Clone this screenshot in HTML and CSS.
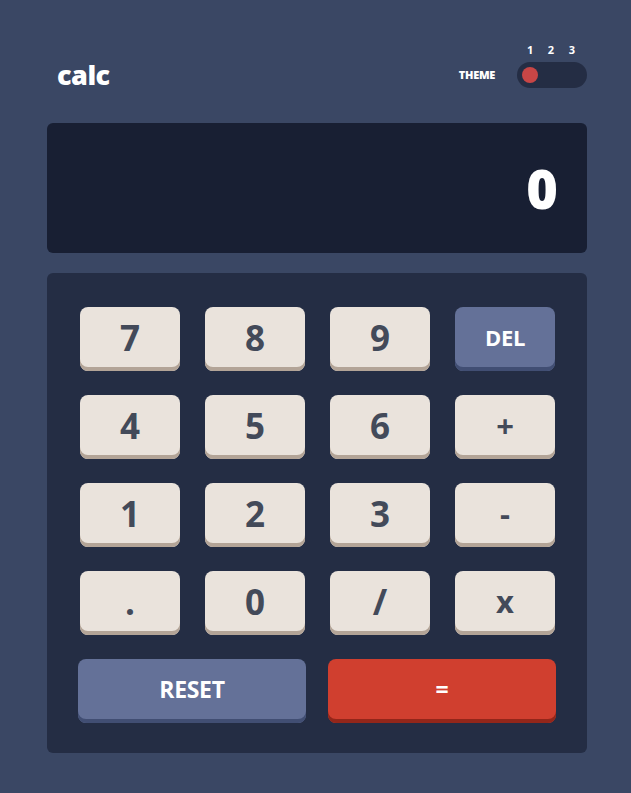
FILE: index.html
```html
<!DOCTYPE html>
<html lang="en">
<head>
<meta charset="utf-8">
<title>calc</title>
<link rel="stylesheet" href="styles.css">
</head>
<body>
<main class="calc">
  <header class="header">
    <h1 class="logo">calc</h1>
    <div class="theme">
      <span class="theme-label">THEME</span>
      <div class="switch">
        <div class="nums"><span>1</span><span>2</span><span>3</span></div>
        <div class="track"><span class="dot"></span></div>
      </div>
    </div>
  </header>
  <section class="display">0</section>
  <section class="keypad">
    <div class="keys">
      <button class="key">7</button>
      <button class="key">8</button>
      <button class="key">9</button>
      <button class="key key-blue key-del">DEL</button>
      <button class="key">4</button>
      <button class="key">5</button>
      <button class="key">6</button>
      <button class="key key-op">+</button>
      <button class="key">1</button>
      <button class="key">2</button>
      <button class="key">3</button>
      <button class="key key-op">-</button>
      <button class="key">.</button>
      <button class="key">0</button>
      <button class="key">/</button>
      <button class="key key-op">x</button>
    </div>
    <div class="wide-keys">
      <button class="key key-blue key-wide">RESET</button>
      <button class="key key-red key-wide">=</button>
    </div>
  </section>
</main>
</body>
</html>
```
FILE: styles.css
```css
* { box-sizing: border-box; }
html, body { margin: 0; padding: 0; }
body {
  background: #3a4764;
  font-family: "Open Sans", "Liberation Sans", sans-serif;
  font-weight: 700;
  color: #ffffff;
}
.calc {
  width: 540px;
  margin-left: 47px;
}
.header {
  display: flex;
  justify-content: space-between;
  align-items: flex-end;
  padding-top: 43px;
}
.logo {
  margin: 0 0 0 10px;
  font-size: 27px;
  line-height: 26px;
  font-weight: 800;
  letter-spacing: -0.5px;
}
.theme {
  display: flex;
  align-items: flex-end;
  gap: 22px;
}
.theme-label {
  font-size: 11px;
  font-weight: 800;
  line-height: 26px;
  letter-spacing: -0.3px;
}
.switch {
  width: 70px;
  display: flex;
  flex-direction: column;
  gap: 6px;
}
.nums {
  display: flex;
  justify-content: space-between;
  padding: 0 12px 0 10px;
  font-size: 11px;
  line-height: 13px;
}
.track {
  height: 26px;
  border-radius: 13px;
  background: #242d44;
  padding: 5px;
  display: flex;
  align-items: center;
}
.dot {
  width: 16px;
  height: 16px;
  border-radius: 50%;
  background: #c84646;
}
.display {
  margin-top: 35px;
  height: 130px;
  background: #181f33;
  border-radius: 6px;
  display: flex;
  align-items: center;
  justify-content: flex-end;
  padding-right: 29px;
  font-size: 54px;
  font-weight: 800;
  line-height: 1;
}
.keypad {
  margin-top: 20px;
  background: #242d44;
  border-radius: 6px;
  padding: 34px 32px 30px 33px;
  height: 480px;
}
.keys {
  display: grid;
  grid-template-columns: repeat(4, 100px);
  column-gap: 25px;
  row-gap: 24px;
}
.key {
  height: 64px;
  border: none;
  border-radius: 8px;
  background: #eae3dc;
  box-shadow: inset 0 -4px 0 #b3a497;
  color: #434a59;
  font-family: inherit;
  font-weight: 700;
  font-size: 35px;
  padding: 0 0 4px 0;
  line-height: 1;
}
.key-op {
  font-size: 31px;
}
.key-del {
  font-size: 22px;
  color: #ffffff;
  letter-spacing: -0.3px;
}
.key-wide {
  font-size: 23px;
  color: #ffffff;
  letter-spacing: -0.3px;
}
.key-blue {
  background: #647198;
  box-shadow: inset 0 -4px 0 #414e73;
}
.key-red {
  background: #d03f2f;
  box-shadow: inset 0 -4px 0 #93261a;
}
.wide-keys {
  display: grid;
  grid-template-columns: 228px 228px;
  column-gap: 22px;
  margin: 24px 0 0 -2px;
}
```
